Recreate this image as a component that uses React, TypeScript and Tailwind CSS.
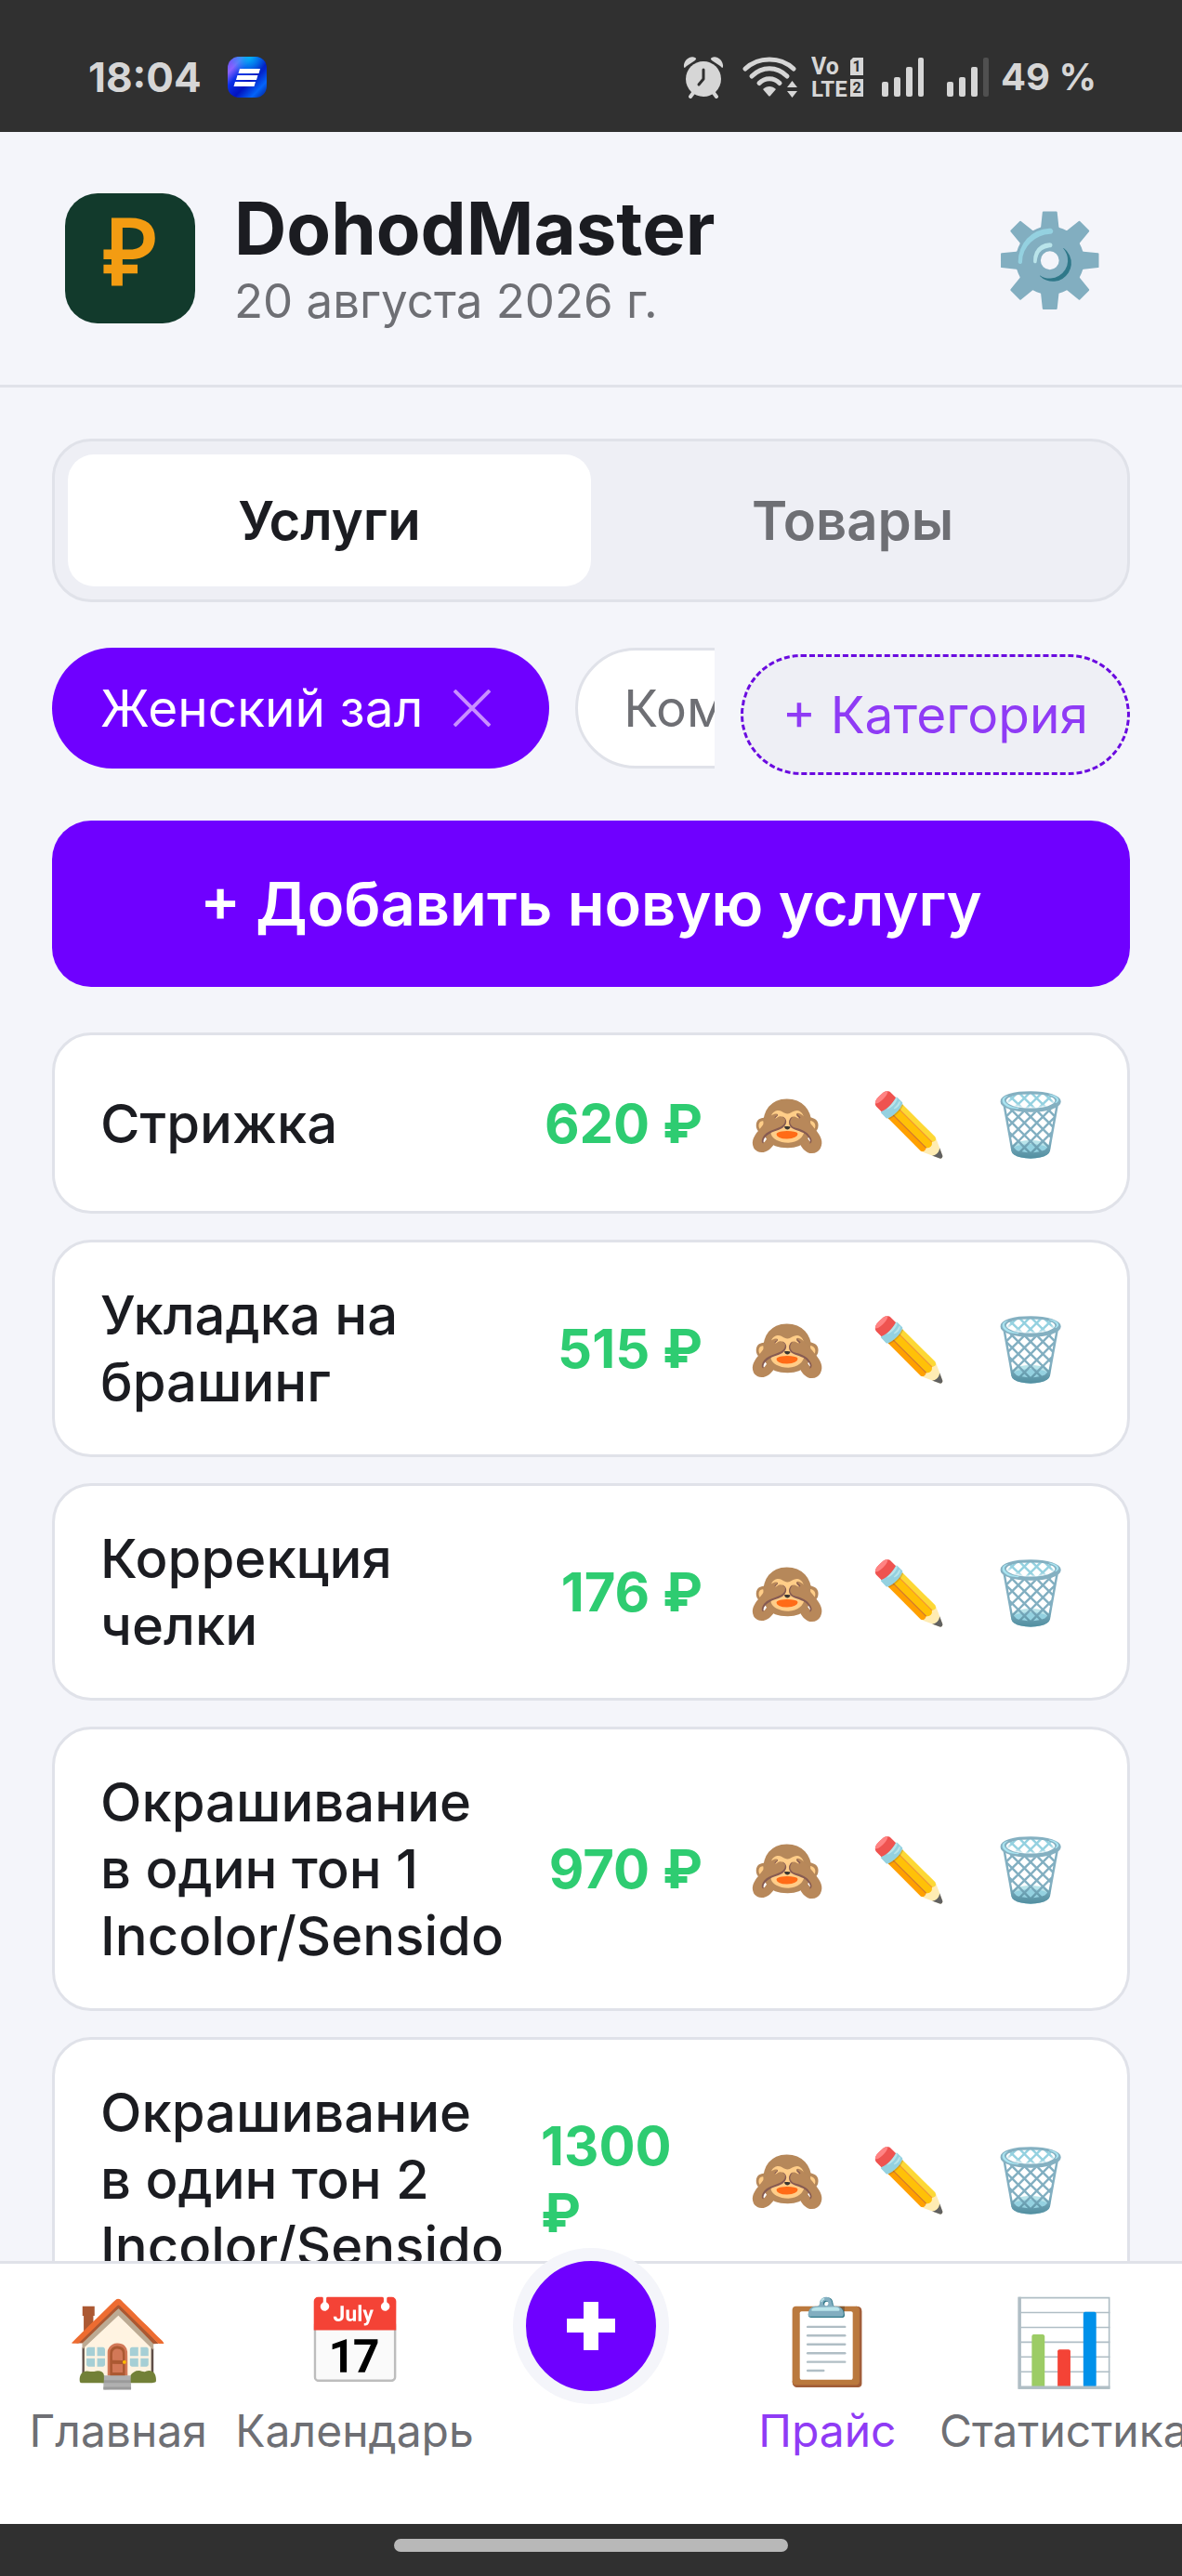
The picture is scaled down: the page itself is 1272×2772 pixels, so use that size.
import React from 'react';

type Service = { name: string; price: string };

const services: Service[] = [
  { name: 'Стрижка', price: '620 ₽' },
  { name: 'Укладка на брашинг', price: '515 ₽' },
  { name: 'Коррекция челки', price: '176 ₽' },
  { name: 'Окрашивание в\u00a0один тон 1 Incolor/Sensido', price: '970 ₽' },
  { name: 'Окрашивание в\u00a0один тон 2 Incolor/Sensido', price: '1300 ₽' },
];

function AppBadge() {
  return (
    <svg className="h-11 w-[42px]" viewBox="0 0 42 44" aria-hidden="true">
      <defs>
        <linearGradient id="badge" x1="0" y1="0" x2="1" y2="1">
          <stop offset="0" stopColor="#5a50f0" />
          <stop offset="0.2" stopColor="#8a62ff" />
          <stop offset="0.36" stopColor="#0a30e8" />
          <stop offset="0.58" stopColor="#0213c0" />
          <stop offset="0.8" stopColor="#0464f8" />
          <stop offset="1" stopColor="#021a90" />
        </linearGradient>
        <radialGradient id="glow" cx="0.55" cy="0" r="0.5">
          <stop offset="0" stopColor="#00b4f5" />
          <stop offset="1" stopColor="#00b4f5" stopOpacity="0" />
        </radialGradient>
      </defs>
      <rect width="42" height="44" rx="12" fill="url(#badge)" />
      <rect width="42" height="44" rx="12" fill="url(#glow)" />
      <path d="M13 13h22l-1.500 5h-22zM10.500 20h22l-1.500 5h-22zM8 27h22l-1.500 5h-22z" fill="#fff" />
    </svg>
  );
}

function AlarmIcon() {
  return (
    <svg className="h-[46px] w-11" viewBox="0 0 44 46" aria-hidden="true">
      <g fill="#d6d6d6">
        <circle cx="22" cy="25" r="19" />
        <path d="M1 12C0 5 8-1 13 2c2 1 1 2 0 3L4 11c-1 1-3 3-3 1zM43 12c1-7-7-13-12-10-2 1-1 2 0 3l9 6c1 1 3 3 3 1z" />
      </g>
      <path d="M11 40l-3 4M33 40l3 4" stroke="#d6d6d6" strokeWidth="4" strokeLinecap="round" />
      <path d="M22 15v10l-5 6" stroke="#303030" strokeWidth="3" fill="none" strokeLinecap="round" strokeLinejoin="round" />
    </svg>
  );
}

function WifiIcon() {
  return (
    <svg className="h-[46px] w-[60px]" viewBox="0 0 60 46" aria-hidden="true">
      <g stroke="#d6d6d6" strokeWidth="5" fill="none" strokeLinecap="round">
        <path d="M3 14C17 .5 41 .5 55 14" />
        <path d="M10 22C21 11 37 11 48 22" />
        <path d="M18 29.500C24 23 34 23 40 29.500" />
      </g>
      <path d="M22 36c4-4 10-4 14 0l-6 7q-1 1-2 0z" fill="#d6d6d6" />
      <path d="M48 34l5.500-7 5.500 7zM48 38l5.500 7 5.500-7z" fill="#d6d6d6" />
    </svg>
  );
}

function VolteIcon() {
  return (
    <svg className="h-11 w-14" viewBox="0 0 56 44" role="img" aria-label="VoLTE">
      <g fill="#d6d6d6" fontFamily="Roboto" fontWeight="700">
        <text x="0" y="19" fontSize="25">Vo</text>
        <text x="0" y="43" fontSize="24">LTE</text>
      </g>
      <path d="M45 1h11v19H42V4zM42 24h14v19H42z" fill="#d6d6d6" />
      <g fill="#303030" fontFamily="Roboto" fontWeight="700" fontSize="16" textAnchor="middle">
        <text x="49" y="16">1</text>
        <text x="49" y="39">2</text>
      </g>
    </svg>
  );
}

function SignalIcon({ weak = false }: { weak?: boolean }) {
  return (
    <svg className="h-11 w-[46px]" viewBox="0 0 46 44" aria-hidden="true">
      <g fill="#d6d6d6">
        <rect x="0" y="27" width="7" height="16" rx="2" />
        <rect x="13" y="22" width="7" height="21" rx="2" />
        <rect x="26" y="11" width="7" height="32" rx="2" />
        <rect x="39" y="1" width="6" height="42" rx="2" fill={weak ? '#505050' : '#d6d6d6'} />
      </g>
    </svg>
  );
}

function StatusBar() {
  return (
    <div className="flex h-[142px] shrink-0 items-center justify-between bg-[#303030] pt-6 pr-[92px] pl-[95px] text-[#d6d6d6]">
      <div className="flex items-center gap-7">
        <span className="text-[44px] leading-none font-bold">18:04</span>
        <AppBadge />
      </div>
      <div className="flex items-center">
        <AlarmIcon />
        <span className="ml-5"><WifiIcon /></span>
        <span className="ml-3.5"><VolteIcon /></span>
        <span className="ml-5"><SignalIcon /></span>
        <span className="ml-6"><SignalIcon weak /></span>
        <span className="ml-3 text-[40px] leading-none font-bold whitespace-nowrap">49 %</span>
      </div>
    </div>
  );
}

function Header() {
  return (
    <header className="flex shrink-0 items-center justify-between border-b-[3px] border-[#e0e2e9] py-[54px] pr-[82px] pl-[70px]">
      <div className="flex items-center gap-[42px]">
        <div className="flex size-[140px] items-center justify-center rounded-[35px] bg-[#123a2c] pb-3 font-['Liberation_Sans',sans-serif] text-[98px] leading-none font-bold text-[#f39c12]">
          ₽
        </div>
        <div className="pt-2">
          <h1 className="text-[78px] leading-[84px] font-bold text-[#1b1c21]">DohodMaster</h1>
          <p className="text-[51px] leading-[72px] text-[#6e6f74]">20 августа 2026 г.</p>
        </div>
      </div>
      <button type="button" aria-label="Настройки" className="text-[96px] leading-none">⚙️</button>
    </header>
  );
}

function Tabs() {
  return (
    <div role="tablist" className="flex rounded-[42px] border-[3px] border-[#e0e2e9] bg-[#eeeff5] p-3.5 text-[58px] leading-[72px] font-semibold">
      <button type="button" role="tab" aria-selected="true" className="flex-1 rounded-[28px] bg-white py-[35px] text-[#1b1c21]">
        Услуги
      </button>
      <button type="button" role="tab" aria-selected="false" className="flex-1 rounded-[28px] py-[35px] text-[#6e6f74]">
        Товары
      </button>
    </div>
  );
}

function Categories() {
  return (
    <div className="mt-[49px] flex items-center gap-7 text-[55px] leading-[68px]">
      <div className="flex min-w-0 flex-1 gap-7 overflow-x-auto pb-3.5 [scrollbar-width:none]">
        <div className="flex h-[130px] shrink-0 items-center gap-[33px] rounded-full bg-[#6f00ff] pr-[63px] pl-[52px] text-white">
          <button type="button">Женский зал</button>
          <button type="button" aria-label="Удалить категорию">
            <svg className="size-10" viewBox="0 0 40 40" fill="none" stroke="#c98fff" strokeWidth="4" aria-hidden="true">
              <path d="M1 1l38 38M39 1L1 39" />
            </svg>
          </button>
        </div>
        <button type="button" className="h-[130px] shrink-0 rounded-full border-[3px] border-[#e0e2e9] bg-white px-[49px] text-[#6e6f74]">
          Комплекс
        </button>
      </div>
      <button type="button" className="h-[130px] shrink-0 rounded-full border-[3px] border-dashed border-[#6a0ae0] bg-[#eeeff5] px-[42px] text-[#8f3bf5]">
        + Категория
      </button>
    </div>
  );
}

function ServiceCard({ name, price }: Service) {
  return (
    <li className="flex items-center rounded-[42px] border-[3px] border-[#e0e2e9] bg-white px-[49px] py-[42px] text-[58px] leading-[72px]">
      <span className="min-w-0 flex-1 font-medium text-[#1b1c21]">{name}</span>
      <span className="mr-9 ml-7 max-w-[174px] font-bold text-[#2ecc71]">{price}</span>
      <div className="flex gap-[21px] text-[66px] leading-none">
        <button type="button" aria-label="Скрыть" className="flex h-[105px] w-[110px] items-center justify-center">🙈</button>
        <button type="button" aria-label="Изменить" className="flex h-[105px] w-[110px] items-center justify-center">✏️</button>
        <button type="button" aria-label="Удалить" className="flex h-[105px] w-[110px] items-center justify-center">🗑️</button>
      </div>
    </li>
  );
}

function NavItem({ icon, label, active = false }: { icon: string; label: string; active?: boolean }) {
  return (
    <a
      href="#"
      aria-current={active ? 'page' : undefined}
      className={`flex w-1/5 shrink-0 flex-col items-center whitespace-nowrap ${active ? 'text-[#8f3bf5]' : 'text-[#6e6f74]'}`}
    >
      <span className="text-[90px] leading-[104px]" aria-hidden="true">{icon}</span>
      <span className="mt-3.5 text-[48px] leading-[60px]">{label}</span>
    </a>
  );
}

function BottomNav() {
  return (
    <nav className="flex h-[283px] shrink-0 border-t-[3px] border-[#e0e2e9] bg-white pt-8">
      <NavItem icon="🏠" label="Главная" />
      <NavItem icon="📅" label="Календарь" />
      <div className="relative w-1/5 shrink-0">
        <button
          type="button"
          aria-label="Добавить"
          className="absolute -top-[49px] left-1/2 flex size-[168px] -translate-x-1/2 items-center justify-center rounded-full border-[14px] border-[#f4f5fa] bg-[#6f00ff]"
        >
          <svg className="size-[52px]" viewBox="0 0 52 52" fill="#fff" aria-hidden="true">
            <path d="M18 0h16v18h18v15H34v19H18V33H0V18h18z" />
          </svg>
        </button>
      </div>
      <NavItem icon="📋" label="Прайс" active />
      <NavItem icon="📊" label="Статистика" />
    </nav>
  );
}

export default function App() {
  return (
    <div className="flex h-screen flex-col overflow-hidden bg-[#f4f5fa] font-[Inter,sans-serif]">
      <StatusBar />
      <Header />
      <main className="min-h-0 flex-1 overflow-y-auto px-14 pt-[55px] [scrollbar-width:none]">
        <Tabs />
        <Categories />
        <button type="button" className="mt-[42px] w-full rounded-[42px] bg-[#6f00ff] py-[49px] text-[65px] leading-[81px] font-semibold text-white">
          + Добавить новую услугу
        </button>
        <ul className="mt-[49px] flex flex-col gap-7 pb-7">
          {services.map((s) => (
            <ServiceCard key={s.name} {...s} />
          ))}
        </ul>
      </main>
      <BottomNav />
      <div className="flex h-14 shrink-0 justify-center bg-[#303030] pt-4">
        <div className="h-3.5 w-1/3 rounded-full bg-[#b8b8b8]" />
      </div>
    </div>
  );
}
